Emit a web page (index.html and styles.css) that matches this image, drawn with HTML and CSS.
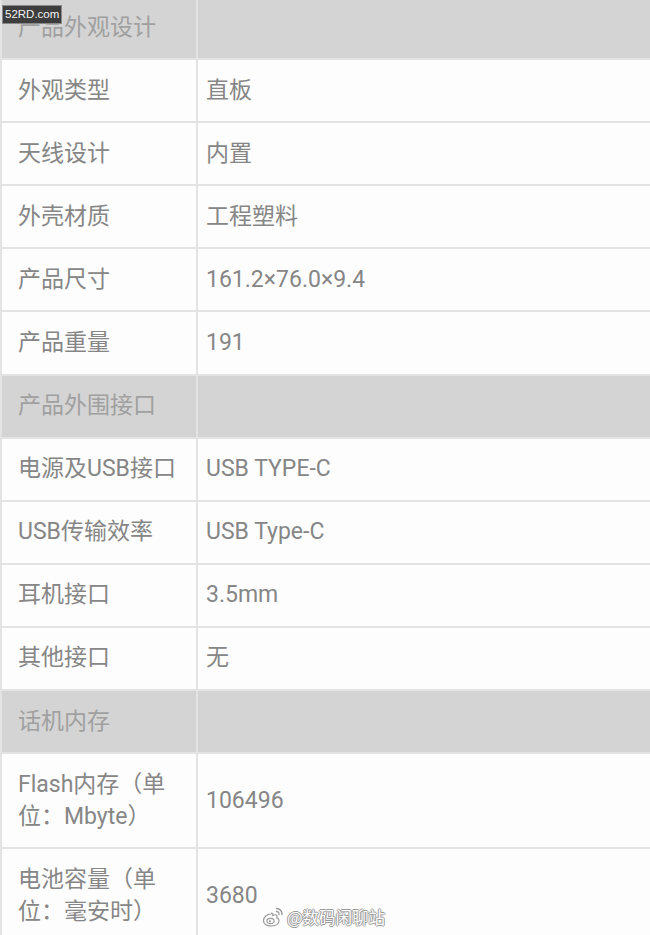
FILE: index.html
```html
<!DOCTYPE html>
<html lang="zh-CN">
<head>
  <meta charset="UTF-8" />
  <meta name="viewport" content="width=device-width, initial-scale=1.0" />
  <title>参数</title>
  <link rel="stylesheet" href="styles.css">
</head>
<body>
  <div class="site-mark">52RD.com</div>

  <table class="spec">
    <tr class="group"><td class="name">产品外观设计</td><td class="val"></td></tr>
    <tr><td class="name">外观类型</td><td class="val">直板</td></tr>
    <tr><td class="name">天线设计</td><td class="val">内置</td></tr>
    <tr><td class="name">外壳材质</td><td class="val">工程塑料</td></tr>
    <tr><td class="name">产品尺寸</td><td class="val">161.2×76.0×9.4</td></tr>
    <tr><td class="name">产品重量</td><td class="val">191</td></tr>

    <tr class="group"><td class="name">产品外围接口</td><td class="val"></td></tr>
    <tr><td class="name">电源及USB接口</td><td class="val">USB TYPE-C</td></tr>
    <tr><td class="name">USB传输效率</td><td class="val">USB Type-C</td></tr>
    <tr><td class="name">耳机接口</td><td class="val">3.5mm</td></tr>
    <tr><td class="name">其他接口</td><td class="val">无</td></tr>

    <tr class="group"><td class="name">话机内存</td><td class="val"></td></tr>
    <tr class="tall"><td class="name">Flash内存（单位：Mbyte）</td><td class="val">106496</td></tr>
    <tr class="tall"><td class="name">电池容量（单位：毫安时）</td><td class="val">3680</td></tr>
  </table>

  <div class="weibo-mark">
    <svg width="22" height="20" viewBox="0 0 22 20">
      <path d="M9 7c-4 0-7.5 3-7.5 6.5S4.5 19 9.5 19 17 16.5 17 13.5c0-1.600-1.200-2.400-2.200-2.600.4-1 .5-2.200-.4-2.800-1-.7-2.600-.2-3.600.3.3-.9.2-1.900-.6-2.200C9.3 5.8 9.2 6.9 9 7z" fill="#fff" stroke="#999" stroke-width="1.2"/>
      <ellipse cx="8.5" cy="14" rx="3.6" ry="2.6" fill="#fff" stroke="#999" stroke-width="1.1"/>
      <circle cx="8" cy="14.3" r="1.1" fill="#999"/>
      <path d="M14.5 1.5a5.5 5.5 0 0 1 5.5 6" fill="none" stroke="#999" stroke-width="1.4" stroke-linecap="round"/>
      <path d="M14.5 4.5a2.5 2.5 0 0 1 2.5 3" fill="none" stroke="#999" stroke-width="1.3" stroke-linecap="round"/>
    </svg>
    <span>@数码闲聊站</span>
  </div>
</body>
</html>
```

FILE: styles.css
```css
body {
  margin: 0;
  background: #fdfdfd;
  font-family: Roboto, "Noto Sans CJK SC", sans-serif;
  overflow: hidden;
}

/* watermark on top of the first header */
.site-mark {
  position: absolute;
  top: 5px;
  left: 2px;
  z-index: 2;
  padding: 0 2px;
  height: 17px;
  line-height: 17px;
  background: #3d3d3d;
  border: 1px solid #8a8a8a;
  color: #f2f2f2;
  font-family: "Liberation Sans", Arial, sans-serif;
  font-size: 11.5px;
}

.spec {
  width: 100%;
  margin-top: -5px;
  border-collapse: collapse;
}

.spec td {
  border: 2px solid #e3e3e3;
  height: 61.1px;
  padding: 0;
  vertical-align: middle;
  font-size: 23px;
  line-height: 32px;
  color: #868686;
}

.spec td.val {
  border-right: none;
  padding-left: 8px;
}

.spec td.name {
  width: 159px;
  padding-left: 16px;
  padding-right: 19px;
}

.group td {
  background: #d4d4d4;
  color: #a0a0a0;
}

.tall td {
  height: auto;
  padding-top: 15px;
  padding-bottom: 14px;
}

/* weibo watermark, bottom right */
.weibo-mark {
  position: absolute;
  left: 262px;
  top: 905px;
  display: flex;
  align-items: center;
  gap: 3px;
  font-family: "Noto Sans CJK SC", sans-serif;
  font-size: 16.5px;
  color: #fff;
  text-shadow: -1px 0 #9a9a9a, 1px 0 #9a9a9a, 0 -1px #9a9a9a, 0 1px #9a9a9a;
}
```
